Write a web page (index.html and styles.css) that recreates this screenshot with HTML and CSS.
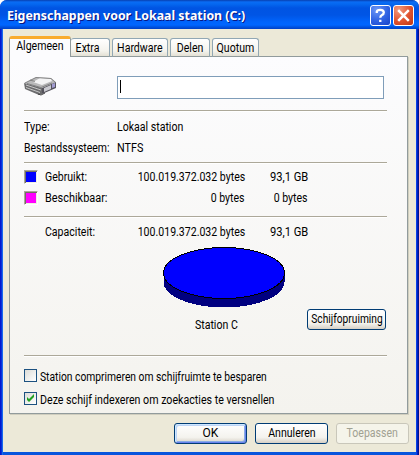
FILE: index.html
```html
<!DOCTYPE html>
<html lang="nl">
<head>
<meta charset="utf-8">
<title>Eigenschappen voor Lokaal station (C:)</title>
<link rel="stylesheet" href="styles.css">
</head>
<body>
<div class="window">
  <header class="titlebar">
    <h1><span class="t-title">Eigenschappen voor Lokaal station (C:)</span></h1>
    <button class="cap help" aria-label="Help"><svg width="21" height="21" viewBox="0 0 21 21"><path d="M6.8 8V6.7Q7 4.8 10.2 4.8Q13.8 4.8 13.8 7.5Q13.8 9.1 12 10Q10.3 10.9 10.3 12.8M10.3 14.8V17" fill="none" stroke="#fff" stroke-width="2.3"/></svg></button>
    <button class="cap close" aria-label="Sluiten"><svg width="21" height="21" viewBox="0 0 21 21"><path d="M5.2 5.2L15.8 15.8M15.8 5.2L5.2 15.8" stroke="#fff" stroke-width="2.5"/></svg></button>
  </header>
  <main class="body">
    <nav class="tabs">
      <div class="tab active"><span class="t-alg">Algemeen</span></div>
      <div class="tab extra"><span class="t-ext">Extra</span></div>
      <div class="tab hardware"><span class="t-har">Hardware</span></div>
      <div class="tab delen"><span class="t-del">Delen</span></div>
      <div class="tab quotum"><span class="t-quo">Quotum</span></div>
    </nav>
    <section class="panel">
      <div class="name-row">
        <svg class="drive" width="32" height="20" viewBox="0 0 32 20">
          <path d="M0 7L12 1L27 2L32 6L18 12Z" fill="#b9b9ba"/>
          <path d="M9 6L16 2L27 3L28 5L18 9Z" fill="#f3f3f4"/>
          <path d="M0 7L18 12V18L15 19L1 13Z" fill="#6c6c6e"/>
          <path d="M18 12L32 6V12L18 18Z" fill="#55535c"/>
          <path d="M20 12L27 9V13L20 16Z" fill="#c9c9cf"/>
          <path d="M28 8L31 7V11L28 12Z" fill="#a19bd0"/>
          <path d="M2 9L17 14M2 11.5L16 16.5" stroke="#c6c6c6"/>
          <path d="M1 7L12 1.5L27 2.5L31 6M6 4L11 5.5M3 7.5L17 11.5L28 7" fill="none" stroke="#777" stroke-width=".8"/>
          <path d="M14 18L17 19L21 17" fill="none" stroke="#444"/>
        </svg>
        <div class="field"><i class="caret"></i></div>
      </div>
      <hr>
      <dl class="facts">
        <dt><span class="t-typ">Type:</span></dt><dd><span class="t-lok">Lokaal station</span></dd>
        <dt><span class="t-bes">Bestandssysteem:</span></dt><dd><span class="t-ntf">NTFS</span></dd>
      </dl>
      <hr>
      <div class="usage two">
        <i class="swatch used"></i><div><span class="t-geb">Gebruikt:</span></div><div class="num"><span class="t-num">100.019.372.032 bytes</span></div><div class="num"><span class="t-gb">93,1 GB</span></div>
        <i class="swatch free"></i><div><span class="t-bsc">Beschikbaar:</span></div><div class="num"><span class="t-zero">0 bytes</span></div><div class="num"><span class="t-zero">0 bytes</span></div>
      </div>
      <hr>
      <div class="usage">
        <i></i><div><span class="t-cap">Capaciteit:</span></div><div class="num"><span class="t-num">100.019.372.032 bytes</span></div><div class="num"><span class="t-gb">93,1 GB</span></div>
      </div>
      <div class="chart-row">
        <figure>
          <svg width="122" height="61" viewBox="0 0 122 61" shape-rendering="crispEdges">
            <path d="M.5 26V35A60.5 25.5 0 0 0 121.5 35V26Z" fill="#000080"/>
            <ellipse cx="61" cy="26" rx="60.5" ry="25.5" fill="#00f" stroke="#000"/>
          </svg>
          <figcaption><span class="t-sta">Station C</span></figcaption>
        </figure>
        <button class="btn clean"><span class="t-sch">Schijfopruiming</span></button>
      </div>
      <hr>
      <div class="checks">
        <label><i class="box"></i><span class="t-c1">Station comprimeren om schijfruimte te besparen</span></label>
        <label><i class="box"><svg width="11" height="11" viewBox="0 0 11 11"><path d="M2 4V7L4 9L9 4V1L4 6Z" fill="#21a121"/></svg></i><span class="t-c2">Deze schijf indexeren om zoekacties te versnellen</span></label>
      </div>
    </section>
    <footer class="actions">
      <button class="btn default"><span class="t-ok">OK</span></button>
      <button class="btn"><span class="t-ann">Annuleren</span></button>
      <button class="btn off" disabled><span class="t-toe">Toepassen</span></button>
    </footer>
  </main>
</div>
</body>
</html>
```
FILE: styles.css
```css
* { box-sizing: border-box; }
body { margin: 0; background: #fff; font: 12px/21px Roboto, "Liberation Sans", sans-serif; color: #000; }
button { font: inherit; color: inherit; padding: 0; margin: 0; }

/* condensed interface lettering */
span { display: inline-block; white-space: nowrap; transform: scaleX(.88); transform-origin: left; }
.tab span, .btn span, figcaption span { transform-origin: center; }
.num span { transform-origin: right; }
h1 .t-title { transform: scaleX(1.03); }
.t-typ, .t-ntf { transform: scaleX(.9); }
.num .t-gb { transform: scaleX(.93); }
.t-bes { transform: scaleX(.87); }
.t-bsc { transform: scaleX(.91); }
.btn .t-sch { transform: scaleX(.85); margin: 0 -4px; }
.t-c1 { transform: scaleX(.857); }
.t-c2 { transform: scaleX(.887); }
.btn .t-ok { transform: none; }

.window { width: 419px; height: 455px; border-radius: 7px 7px 0 0; overflow: hidden; background: linear-gradient(90deg, #0019cf 0 1px, #0831d9 1px 2px, #166aee 2px 3px, #0855dd 3px 416px, #0841e8 416px 417px, #0020c0 417px 418px, #00138c 418px); }
.titlebar { height: 29px; display: flex; align-items: center; padding: 1px 5px 0 7px; background: linear-gradient(#0840b0 0, #0a6cf5 2px, #0568f0 4px, #0054e3 8px, #0055e5 15px, #0064fc 22px, #0066ff 25px, #0053e0 27px, #0040c6 29px); }
h1 { margin: 0; flex: 1; color: #fff; font: bold 12px/21px "Noto Sans", sans-serif; white-space: nowrap; text-shadow: 1px 1px #0a1883; }
.cap { width: 21px; height: 21px; border: 1px solid #fff; border-radius: 3px; margin-left: 2px; display: flex; align-items: center; justify-content: center; flex: none; }
.cap svg { flex: none; }
.help { background: radial-gradient(circle at 30% 20%, #6c97f5, #2f62e3 55%, #1744c8); }
.close { background: radial-gradient(circle at 25% 20%, #f19a7e, #e0532f 55%, #bf3511); }
.body { margin: 0 3px; height: 423px; padding: 7px 7px 0 6px; background: #ece9d8; }
.tabs { display: flex; align-items: flex-end; height: 21px; position: relative; margin-bottom: -1px; }
.tab { height: 19px; border: 1px solid #91a7b4; border-bottom-color: #919b9c; border-radius: 3px 3px 0 0; background: linear-gradient(#fff, #f4f3ed 70%, #e3e0d4); line-height: 18px; text-align: center; margin-right: 2px; }
.tab.active { width: 62px; height: 21px; border: solid #919b9c; border-width: 3px 1px 0; border-top-color: #f9ac2e; background: #fcfcfe; line-height: 15px; margin: 0; }
.extra { width: 39px; border-left: 0; padding-right: 4px; }
.hardware { width: 56px; }
.delen { width: 40px; }
.quotum { width: 47px; }
.tab span { margin: 0 -4px; }
.panel { height: 358px; width: 399px; border: 1px solid #919b9c; box-shadow: 1px 1px #d0cebf; background: linear-gradient(#fcfcfe, #f4f3ee); padding: 19px 21px 0 14px; }
.name-row { display: flex; justify-content: space-between; height: 34px; padding-right: 2px; }
.field { width: 267px; height: 23px; border: 1px solid #7f9db9; background: #fff; padding: 3px 2px; }
.caret { display: block; width: 1px; height: 13px; background: #000; }
hr { width: 363px; margin: 0; border: 0; height: 2px; background: linear-gradient(#aca899 50%, #fff 50%); }
.facts { display: grid; grid-template-columns: 93px 1fr; grid-auto-rows: 21px; margin: 0; height: 50px; padding-top: 5px; }
dd { margin: 0; }
.usage { display: grid; grid-template-columns: 21px 82px 118px 63px; grid-auto-rows: 21px; height: 31px; padding-top: 4px; }
.usage.two { height: 52px; padding-top: 3px; }
.num { display: flex; justify-content: flex-end; }
.swatch { width: 14px; height: 14px; margin-top: 3px; border: 1px solid; border-color: #aca899 #fff #fff #aca899; box-shadow: inset 1px 1px #716f64, inset -1px -1px #f1efe2; }
.used { background: #00f; }
.free { background: #f0f; }
.chart-row { display: flex; height: 106px; padding-left: 139px; }
figure { margin: -2px 0 0; width: 122px; text-align: center; }
figure svg { display: block; margin-bottom: 7px; }
.t-sta { margin-right: 15px; }
.btn { display: flex; justify-content: center; align-items: center; width: 73px; height: 21px; border: 1px solid #003c74; border-radius: 3px; background: linear-gradient(#fff, #f4f3ee 70%, #d6d0c5); line-height: 19px; }
.clean { width: 79px; margin: 60px 0 0 22px; }
.checks { padding-top: 10px; }
.checks label { display: flex; height: 23px; }
.box { flex: none; width: 13px; height: 13px; margin: 2px 3px 0 0; border: 1px solid #1c5180; background: linear-gradient(135deg, #dcdcd7, #fff); }
.box svg { display: block; }
.actions { display: flex; justify-content: flex-end; gap: 8px; padding-top: 9px; }
.default { box-shadow: inset 1px 1px #cee7ff, inset -1px -1px #6982ee, inset 2px 2px #bcd4f6, inset -2px -2px #89ade4; }
.off { border-color: #c9c7ba; background: #f5f4ea; color: #a1a192; }
```
